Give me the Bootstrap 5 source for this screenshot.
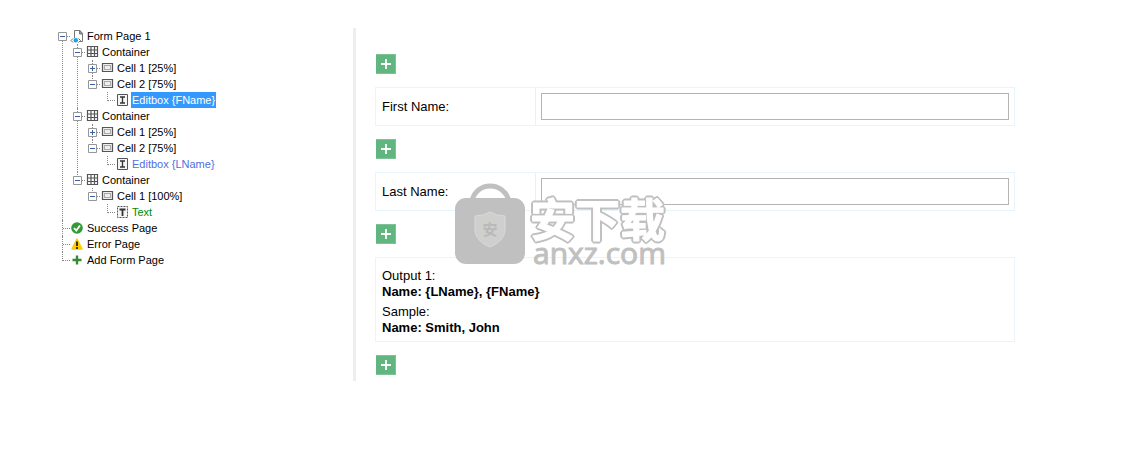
<!DOCTYPE html>
<html lang="en">
<head>
<meta charset="utf-8">
<meta name="viewport" content="width=device-width, initial-scale=1">
<title>Form Builder</title>
<link href="https://cdn.jsdelivr.net/npm/bootstrap@5.3.0/dist/css/bootstrap.min.css" rel="stylesheet">
<style>
  body { font: 13px/16px "Liberation Sans", Arial, sans-serif; color: #000; background: #fff; }
  .builder { padding: 28px 0 28px 55px; }

  /* page tree */
  .tree-pane { flex: 0 0 298px; font-size: 11px; }
  .tree, .tree ul { list-style: none; margin: 0; padding: 0; }
  .tree ul { padding-left: 15px; }
  .tree li { position: relative; }
  .tree li::before { content: ""; position: absolute; left: 7px; top: 0; bottom: 0; border-left: 1px dotted #888; }
  .tree li:last-child::before { bottom: auto; height: 9px; }
  .tree > li:first-child::before { top: 8px; }
  .node { position: relative; height: 16px; }
  .joint { width: 15px; height: 16px; position: relative; }
  .joint::before { content: ""; position: absolute; left: 8px; right: 0; top: 8px; border-top: 1px dotted #888; }
  .toggle { position: relative; display: block; margin: 4px 0 0 3px; width: 9px; height: 9px; padding: 0; border: 0; background: #fff; }
  .toggle svg, .node-icon { display: block; }
  .node a { color: inherit; text-decoration: none; margin-left: 1px; padding: 0 1px; white-space: nowrap; }
  .node a.chosen { background: #3399ff; color: #fff; }
  .node a.field-link { color: #4f6fe0; }
  .node a.text-link { color: #008a00; }

  /* form canvas */
  .canvas-pane { border-left: 3px solid #eee; padding: 26px 20px 6px 19px; min-width: 0; }
  .form-canvas { max-width: 640px; gap: 13px; }
  .add-btn { width: 20px; height: 20px; margin-left: 1px; padding: 0; border: 1px solid #7cc397; border-left: 0; background: #61b57f; }
  .add-btn svg { display: block; margin: 0 auto; }
  .form-row, .output-box { border: 1px solid #e9f5fc; }
  .form-row { position: relative; }
  .label-cell { flex: 0 0 25%; border-right: 1px solid #e3f3fd; padding: 0 6px; }
  .input-cell { padding: 5px; }
  .text-input { display: block; width: 100%; height: 27px; border: 1px solid #b4b4b4; border-radius: 0; padding: 2px 4px; }
  .output-box { padding: 10px 6px 5px; }
  .output-box p { margin: 0; }
  .output-box p + p { margin-top: 4px; }

  /* watermark lying over the canvas */
  .watermark { position: absolute; left: 78px; top: 10px; gap: 3px; pointer-events: none; color: #c0c0c0; }
  .watermark-shield { font: 700 15px "Noto Sans CJK SC", sans-serif; }
  .watermark-zh { display: block; font: 700 45px "Noto Sans CJK SC", sans-serif; fill: #fff; stroke: #fff; stroke-width: 1px; stroke-linejoin: round; overflow: visible;
    filter: drop-shadow(1px 1px #c0c0c0) drop-shadow(-1px -1px #c0c0c0) drop-shadow(1px -1px #c0c0c0) drop-shadow(-1px 1px #c0c0c0); }
  .watermark-text { padding-top: 12px; }
  .watermark-url { font: 400 30px/24px "Open Sans", sans-serif; padding-left: 4px; -webkit-text-stroke: 1px #c0c0c0; }
</style>
</head>
<body>

<svg class="d-none" aria-hidden="true">
  <symbol id="minus" viewBox="0 0 9 9"><path d="M.5.5h8v8h-8z" fill="#fff" stroke="#969696"/><path d="M2 4.5h5" stroke="#3c5ba9"/></symbol>
  <symbol id="plus" viewBox="0 0 9 9"><path d="M.5.5h8v8h-8z" fill="#fff" stroke="#969696"/><path d="M2 4.5h5M4.5 2v5" stroke="#3c5ba9"/></symbol>
  <symbol id="page" viewBox="0 0 15 16"><path d="M4.500 10V2.500h5l3 3v8h-3" fill="#fff" stroke="#777"/><path d="M9.500 2v4H13z" fill="#999" stroke="#777"/><path d="M3 10.500 1 12.500l2 2M8.500 10.500l2 2-2 2" fill="none" stroke="#666"/><circle cx="5.800" cy="12.300" r="2.200" fill="#12a4e8"/></symbol>
  <symbol id="grid" viewBox="0 0 15 16"><path d="M2.500 2.500h10v10h-10zM6 2.500v10M9.500 2.500v10M2.500 6h10M2.500 9.500h10" fill="none" stroke="#555" stroke-width="1.200"/></symbol>
  <symbol id="cell" viewBox="0 0 15 16"><path d="M2.500 3.500h10v8h-10z" fill="#eee" stroke="#555" stroke-width="1.200"/><path d="M4.500 5.500h6v4h-6z" fill="none" stroke="#666" stroke-dasharray="1 1"/></symbol>
  <symbol id="edit" viewBox="0 0 15 16"><path d="M2.500 2.500h10v11h-10z" fill="#f5f5f5" stroke="#555"/><path d="M5 5h5M7.500 5v6M5 11h5" fill="none" stroke="#333" stroke-width="1.300"/></symbol>
  <symbol id="text" viewBox="0 0 15 16"><path d="M2.500 2.500h10v11h-10z" fill="#f5f5f5" stroke="#555" stroke-dasharray="2 1"/><path d="M4.500 5.500h6M7.500 5v7" stroke="#333" stroke-width="1.800"/></symbol>
  <symbol id="success" viewBox="0 0 15 16"><circle cx="7" cy="8" r="5.800" fill="#329a35"/><path d="m4 8 2.300 2.500L10 5.500" fill="none" stroke="#fff" stroke-width="1.800"/></symbol>
  <symbol id="error" viewBox="0 0 15 16"><path d="M7 3 12 13H2z" fill="#fc0" stroke="#fc0" stroke-width="1.500" stroke-linejoin="round"/><path d="M7 5.500V10M7 11v2" stroke="#222" stroke-width="1.800"/></symbol>
  <symbol id="add" viewBox="0 0 15 16"><path d="M7 3.500v9M2.500 8h9" stroke="#358a38" stroke-width="2.400"/></symbol>
  <symbol id="cross" viewBox="0 0 18 18"><path d="M9 4v10M4 9h10" stroke="#fff" stroke-width="1.800"/></symbol>
</svg>

<div class="builder d-flex align-items-start">
  <nav class="tree-pane" aria-label="Form pages">
    <ul class="tree">
      <li>
        <div class="node d-flex"><span class="joint"><button class="toggle" type="button" aria-label="Collapse"><svg width="9" height="9"><use href="#minus"/></svg></button></span><svg class="node-icon" width="15" height="16"><use href="#page"/></svg><a href="#">Form Page 1</a></div>
        <ul>
          <li>
            <div class="node d-flex"><span class="joint"><button class="toggle" type="button" aria-label="Collapse"><svg width="9" height="9"><use href="#minus"/></svg></button></span><svg class="node-icon" width="15" height="16"><use href="#grid"/></svg><a href="#">Container</a></div>
            <ul>
              <li><div class="node d-flex"><span class="joint"><button class="toggle" type="button" aria-label="Expand"><svg width="9" height="9"><use href="#plus"/></svg></button></span><svg class="node-icon" width="15" height="16"><use href="#cell"/></svg><a href="#">Cell 1 [25%]</a></div></li>
              <li>
                <div class="node d-flex"><span class="joint"><button class="toggle" type="button" aria-label="Collapse"><svg width="9" height="9"><use href="#minus"/></svg></button></span><svg class="node-icon" width="15" height="16"><use href="#cell"/></svg><a href="#">Cell 2 [75%]</a></div>
                <ul><li><div class="node d-flex"><span class="joint"></span><svg class="node-icon" width="15" height="16"><use href="#edit"/></svg><a class="chosen" href="#">Editbox {FName}</a></div></li></ul>
              </li>
            </ul>
          </li>
          <li>
            <div class="node d-flex"><span class="joint"><button class="toggle" type="button" aria-label="Collapse"><svg width="9" height="9"><use href="#minus"/></svg></button></span><svg class="node-icon" width="15" height="16"><use href="#grid"/></svg><a href="#">Container</a></div>
            <ul>
              <li><div class="node d-flex"><span class="joint"><button class="toggle" type="button" aria-label="Expand"><svg width="9" height="9"><use href="#plus"/></svg></button></span><svg class="node-icon" width="15" height="16"><use href="#cell"/></svg><a href="#">Cell 1 [25%]</a></div></li>
              <li>
                <div class="node d-flex"><span class="joint"><button class="toggle" type="button" aria-label="Collapse"><svg width="9" height="9"><use href="#minus"/></svg></button></span><svg class="node-icon" width="15" height="16"><use href="#cell"/></svg><a href="#">Cell 2 [75%]</a></div>
                <ul><li><div class="node d-flex"><span class="joint"></span><svg class="node-icon" width="15" height="16"><use href="#edit"/></svg><a class="field-link" href="#">Editbox {LName}</a></div></li></ul>
              </li>
            </ul>
          </li>
          <li>
            <div class="node d-flex"><span class="joint"><button class="toggle" type="button" aria-label="Collapse"><svg width="9" height="9"><use href="#minus"/></svg></button></span><svg class="node-icon" width="15" height="16"><use href="#grid"/></svg><a href="#">Container</a></div>
            <ul>
              <li>
                <div class="node d-flex"><span class="joint"><button class="toggle" type="button" aria-label="Collapse"><svg width="9" height="9"><use href="#minus"/></svg></button></span><svg class="node-icon" width="15" height="16"><use href="#cell"/></svg><a href="#">Cell 1 [100%]</a></div>
                <ul><li><div class="node d-flex"><span class="joint"></span><svg class="node-icon" width="15" height="16"><use href="#text"/></svg><a class="text-link" href="#">Text</a></div></li></ul>
              </li>
            </ul>
          </li>
        </ul>
      </li>
      <li><div class="node d-flex"><span class="joint"></span><svg class="node-icon" width="15" height="16"><use href="#success"/></svg><a href="#">Success Page</a></div></li>
      <li><div class="node d-flex"><span class="joint"></span><svg class="node-icon" width="15" height="16"><use href="#error"/></svg><a href="#">Error Page</a></div></li>
      <li><div class="node d-flex"><span class="joint"></span><svg class="node-icon" width="15" height="16"><use href="#add"/></svg><a href="#">Add Form Page</a></div></li>
    </ul>
  </nav>

  <main class="canvas-pane flex-grow-1">
    <form class="form-canvas d-flex flex-column">
      <button class="add-btn" type="button" aria-label="Add row"><svg width="18" height="18"><use href="#cross"/></svg></button>

      <div class="form-row d-flex">
        <div class="label-cell d-flex align-items-center"><label for="fname">First Name:</label></div>
        <div class="input-cell flex-grow-1"><input class="text-input" type="text" id="fname"></div>
      </div>

      <button class="add-btn" type="button" aria-label="Add row"><svg width="18" height="18"><use href="#cross"/></svg></button>

      <div class="form-row d-flex">
        <div class="label-cell d-flex align-items-center"><label for="lname">Last Name:</label></div>
        <div class="input-cell flex-grow-1"><input class="text-input" type="text" id="lname"></div>
        <div class="watermark d-flex">
          <svg class="watermark-shield" width="72" height="83" viewBox="0 0 72 83">
            <path d="M18 18C22 -2 50 -2 55 18" fill="none" stroke="#c0c0c0" stroke-width="5"/>
            <rect x="1" y="15" width="70" height="66" rx="11" fill="#c0c0c0"/>
            <path d="M36 29q7 4 15 4v13c0 9-6 14-15 18-9-4-15-9-15-18V33q8 0 15-4z" fill="#cfcfcd" stroke="#dadada"/>
            <text x="36" y="52" text-anchor="middle" fill="#b9b9b9">安</text>
          </svg>
          <div class="watermark-text">
            <svg class="watermark-zh" width="138" height="46" viewBox="0 0 138 46"><text x="1" y="42">安下载</text></svg>
            <div class="watermark-url">anxz.com</div>
          </div>
        </div>
      </div>

      <button class="add-btn" type="button" aria-label="Add row"><svg width="18" height="18"><use href="#cross"/></svg></button>

      <div class="output-box">
        <p>Output 1:<br><b>Name: {LName}, {FName}</b></p>
        <p>Sample:<br><b>Name: Smith, John</b></p>
      </div>

      <button class="add-btn" type="button" aria-label="Add row"><svg width="18" height="18"><use href="#cross"/></svg></button>
    </form>
  </main>
</div>

<script src="https://cdn.jsdelivr.net/npm/bootstrap@5.3.0/dist/js/bootstrap.bundle.min.js"></script>
</body>
</html>
